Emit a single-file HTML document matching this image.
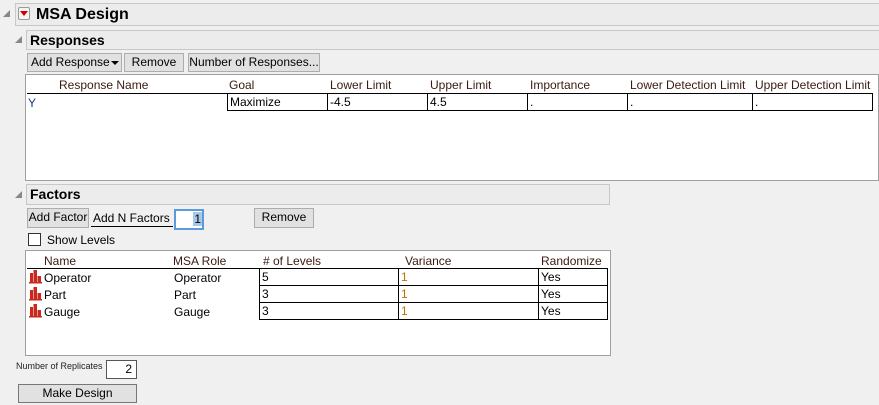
<!DOCTYPE html>
<html><head><meta charset="utf-8"><style>
body{margin:0;width:879px;height:405px;background:#f0f0f0;font-family:"Liberation Sans",sans-serif;font-size:12px;color:#000;position:relative;overflow:hidden}
.a{position:absolute;white-space:nowrap}
.hdr{position:absolute;background:#ececec;border:1px solid #c8c8c8;border-right:none;font-weight:bold;box-sizing:border-box}
.btn{position:absolute;background:#e1e1e1;border:1px solid #adadad;box-sizing:border-box;text-align:center;line-height:17px;font-size:12px}
.box{position:absolute;background:#fff;border:1px solid #a0a0a0;box-sizing:border-box}
.th{position:absolute;color:#3a1a10;font-size:12px}
.cell{position:absolute;border:1px solid #000;box-sizing:border-box;padding-left:2px;line-height:17px;font-size:12px}
.tri{position:absolute;width:0;height:0;border-left:7px solid transparent;border-bottom:7px solid #888}
</style></head><body>
<div class="tri" style="left:3px;top:10px"></div>
<div class="hdr" style="left:15px;top:3px;width:864px;height:23px;font-size:16px;line-height:21px;padding-left:20px">MSA Design</div>
<div class="a" style="left:18px;top:7px;width:10px;height:11px;border:1px solid #999;border-radius:2px;background:#f4f4f4"></div>
<div class="a" style="left:20px;top:11px;width:0;height:0;border-left:4px solid transparent;border-right:4px solid transparent;border-top:5px solid #d00000"></div>

<div class="tri" style="left:15px;top:36px"></div>
<div class="hdr" style="left:26px;top:30px;width:853px;height:20px;font-size:14px;line-height:18px;padding-left:3px">Responses</div>
<div class="btn" style="left:27px;top:53px;width:95px;height:19px;text-align:left;padding-left:3px">Add Response<span style="position:absolute;left:83px;top:7px;border-left:4px solid transparent;border-right:4px solid transparent;border-top:4px solid #000"></span></div>
<div class="btn" style="left:124px;top:53px;width:60px;height:19px">Remove</div>
<div class="btn" style="left:188px;top:53px;width:132px;height:19px">Number of Responses...</div>

<div class="box" style="left:25px;top:74px;width:854px;height:107px"></div>
<div class="th" style="left:59px;top:78px">Response Name</div>
<div class="th" style="left:229px;top:78px">Goal</div>
<div class="th" style="left:330px;top:78px">Lower Limit</div>
<div class="th" style="left:430px;top:78px">Upper Limit</div>
<div class="th" style="left:530px;top:78px">Importance</div>
<div class="th" style="left:630px;top:78px">Lower Detection Limit</div>
<div class="th" style="left:755px;top:78px">Upper Detection Limit</div>
<div class="a" style="left:27px;top:93px;width:846px;height:1px;background:#000"></div>
<div class="a" style="left:28px;top:96px;color:#1a3a80">Y</div>
<div class="cell" style="left:227px;top:93px;width:101px;height:18px">Maximize</div>
<div class="cell" style="left:327px;top:93px;width:101px;height:18px">-4.5</div>
<div class="cell" style="left:427px;top:93px;width:101px;height:18px">4.5</div>
<div class="cell" style="left:527px;top:93px;width:101px;height:18px">.</div>
<div class="cell" style="left:627px;top:93px;width:126px;height:18px">.</div>
<div class="cell" style="left:752px;top:93px;width:121px;height:18px">.</div>

<div class="tri" style="left:15px;top:191px"></div>
<div class="hdr" style="left:26px;top:184px;width:584px;height:21px;font-size:14px;line-height:19px;padding-left:3px;border-right:1px solid #c8c8c8">Factors</div>
<div class="btn" style="left:27px;top:208px;width:62px;height:20px">Add Factor</div>
<div class="a" style="left:91px;top:209px;width:82px;height:18px;border-bottom:1px solid #000;line-height:18px;padding-left:2px;box-sizing:border-box">Add N Factors</div>
<div class="a" style="left:174px;top:209px;width:30px;height:21px;border:2px solid #5a9ade;background:#fff;box-sizing:border-box;text-align:right;line-height:17px"><span style="background:#a8c8e8;padding:0 1px">1</span></div>
<div class="btn" style="left:254px;top:208px;width:60px;height:20px">Remove</div>
<div class="a" style="left:28px;top:233px;width:13px;height:13px;border:1px solid #333;background:#fff;box-sizing:border-box"></div>
<div class="a" style="left:47px;top:233px">Show Levels</div>

<div class="box" style="left:25px;top:250px;width:586px;height:106px"></div>
<div class="th" style="left:44px;top:254px">Name</div>
<div class="th" style="left:173px;top:254px">MSA Role</div>
<div class="th" style="left:263px;top:254px">&#35; of Levels</div>
<div class="th" style="left:405px;top:254px">Variance</div>
<div class="th" style="left:541px;top:254px">Randomize</div>
<div class="a" style="left:27px;top:268px;width:580px;height:1px;background:#000"></div>

<svg class="a" style="left:29px;top:269px" width="14" height="52">
<g fill="#c8281e"><rect x="1" y="4" width="3" height="10"/><rect x="4.5" y="1" width="3.5" height="13"/><rect x="8.5" y="7" width="3.5" height="7"/><rect x="0" y="13" width="13" height="1.5"/>
<rect x="1" y="21" width="3" height="10"/><rect x="4.5" y="18" width="3.5" height="13"/><rect x="8.5" y="24" width="3.5" height="7"/><rect x="0" y="30" width="13" height="1.5"/>
<rect x="1" y="38" width="3" height="10"/><rect x="4.5" y="35" width="3.5" height="13"/><rect x="8.5" y="41" width="3.5" height="7"/><rect x="0" y="47" width="13" height="1.5"/></g></svg>
<div class="a" style="left:44px;top:271px">Operator</div>
<div class="a" style="left:44px;top:288px">Part</div>
<div class="a" style="left:44px;top:305px">Gauge</div>
<div class="a" style="left:174px;top:271px">Operator</div>
<div class="a" style="left:174px;top:288px">Part</div>
<div class="a" style="left:174px;top:305px">Gauge</div>

<div class="cell" style="left:259px;top:268px;width:140px;height:18px">5</div>
<div class="cell" style="left:398px;top:268px;width:141px;height:18px;color:#c07000">1</div>
<div class="cell" style="left:538px;top:268px;width:70px;height:18px">Yes</div>
<div class="cell" style="left:259px;top:285px;width:140px;height:18px">3</div>
<div class="cell" style="left:398px;top:285px;width:141px;height:18px;color:#c07000">1</div>
<div class="cell" style="left:538px;top:285px;width:70px;height:18px">Yes</div>
<div class="cell" style="left:259px;top:302px;width:140px;height:18px">3</div>
<div class="cell" style="left:398px;top:302px;width:141px;height:18px;color:#c07000">1</div>
<div class="cell" style="left:538px;top:302px;width:70px;height:18px">Yes</div>

<div class="a" style="left:16px;top:361px;font-size:9px;color:#222">Number of Replicates</div>
<div class="a" style="left:106px;top:360px;width:31px;height:19px;border:1px solid #555;background:#fff;box-sizing:border-box;text-align:right;padding-right:4px;line-height:17px">2</div>
<div class="btn" style="left:18px;top:384px;width:119px;height:19px;border-color:#777">Make Design</div>
</body></html>
